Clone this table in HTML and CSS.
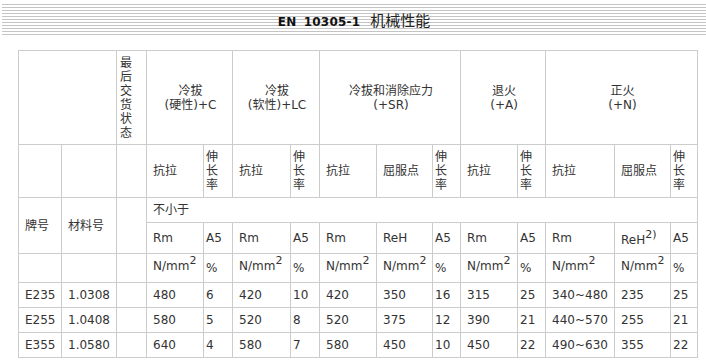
FILE: index.html
```html
<!DOCTYPE html>
<html lang="zh">
<head>
<meta charset="utf-8">
<title>EN 10305-1 机械性能</title>
<link rel="stylesheet" href="styles.css">
</head>
<body>
<div class="title"><b>EN 10305-1</b><span class="zh">机械性能</span></div>
<table class="props">
  <colgroup>
    <col style="width:43px"><col style="width:55px"><col style="width:30px">
    <col style="width:57px"><col style="width:29px">
    <col style="width:58px"><col style="width:29px">
    <col style="width:57px"><col style="width:56px"><col style="width:28px">
    <col style="width:57px"><col style="width:28px">
    <col style="width:69px"><col style="width:56px"><col style="width:27px">
  </colgroup>
  <tr class="r1">
    <td colspan="2"></td>
    <td class="state">最后交货状态</td>
    <td colspan="2" class="grp">冷拔<br>(硬性)+C</td>
    <td colspan="2" class="grp">冷拔<br>(软性)+LC</td>
    <td colspan="3" class="grp">冷拔和消除应力<br>(+SR)</td>
    <td colspan="2" class="grp">退火<br>(+A)</td>
    <td colspan="3" class="grp">正火<br>(+N)</td>
  </tr>
  <tr class="r2">
    <td></td><td></td><td></td>
    <td>抗拉</td><td class="nar">伸长率</td>
    <td>抗拉</td><td class="nar">伸长率</td>
    <td>抗拉</td><td>屈服点</td><td class="nar">伸长率</td>
    <td>抗拉</td><td class="nar">伸长率</td>
    <td>抗拉</td><td>屈服点</td><td class="nar">伸长率</td>
  </tr>
  <tr class="r3">
    <td rowspan="2">牌号</td><td rowspan="2">材料号</td><td rowspan="2"></td>
    <td colspan="12">不小于</td>
  </tr>
  <tr class="r4">
    <td>Rm</td><td class="nar">A5</td>
    <td>Rm</td><td class="nar">A5</td>
    <td>Rm</td><td>ReH</td><td class="nar">A5</td>
    <td>Rm</td><td class="nar">A5</td>
    <td>Rm</td><td class="low">ReH<sup>2)</sup></td><td class="nar">A5</td>
  </tr>
  <tr class="r5">
    <td></td><td></td><td></td>
    <td>N/mm<sup>2</sup></td><td class="nar">%</td>
    <td>N/mm<sup>2</sup></td><td class="nar">%</td>
    <td>N/mm<sup>2</sup></td><td>N/mm<sup>2</sup></td><td class="nar">%</td>
    <td>N/mm<sup>2</sup></td><td class="nar">%</td>
    <td>N/mm<sup>2</sup></td><td>N/mm<sup>2</sup></td><td class="nar">%</td>
  </tr>
  <tr class="rd">
    <td>E235</td><td>1.0308</td><td></td>
    <td>480</td><td class="nar">6</td>
    <td>420</td><td class="nar">10</td>
    <td>420</td><td>350</td><td class="nar">16</td>
    <td>315</td><td class="nar">25</td>
    <td>340~480</td><td>235</td><td class="nar">25</td>
  </tr>
  <tr class="rd">
    <td>E255</td><td>1.0408</td><td></td>
    <td>580</td><td class="nar">5</td>
    <td>520</td><td class="nar">8</td>
    <td>520</td><td>375</td><td class="nar">12</td>
    <td>390</td><td class="nar">21</td>
    <td>440~570</td><td>255</td><td class="nar">21</td>
  </tr>
  <tr class="rd">
    <td>E355</td><td>1.0580</td><td></td>
    <td>640</td><td class="nar">4</td>
    <td>580</td><td class="nar">7</td>
    <td>580</td><td>450</td><td class="nar">10</td>
    <td>450</td><td class="nar">22</td>
    <td>490~630</td><td>355</td><td class="nar">22</td>
  </tr>
</table>
</body>
</html>
```
FILE: styles.css
```css
html, body {
  margin: 0;
  padding: 0;
  background: #fff;
}
body {
  font-family: "DejaVu Sans", "Noto Sans CJK SC", sans-serif;
  font-size: 12px;
  color: #333;
}
.title {
  margin: 4px 0 0 2px;
  height: 31px;
  line-height: 31px;
  text-align: center;
  color: #111;
  background: repeating-linear-gradient(to bottom, #c4c4c4 0, #c4c4c4 1px, #fff 1px, #fff 3px);
}
.title b {
  font-family: "DejaVu Sans", sans-serif;
  font-weight: bold;
  font-size: 12px;
  letter-spacing: 0.2px;
  word-spacing: 3px;
  margin-right: 10px;
}
.title .zh {
  font-family: "Noto Sans CJK SC", sans-serif;
  font-size: 15px;
  font-weight: normal;
  color: #222;
}
.props {
  margin: 15px 0 0 18px;
  border-collapse: collapse;
  table-layout: fixed;
  width: 680px;
}
.props td {
  border: 1px solid #cccccc;
  padding: 0 4px 0 6px;
  text-align: left;
  vertical-align: middle;
  line-height: 14px;
  white-space: normal;
  overflow: hidden;
}
.props td.nar {
  padding: 0 6px 0 2px;
}
.props td.grp {
  text-align: center;
  line-height: 14px;
}
.props td.state {
  padding: 5px 4px 0 3px;
  line-height: 14px;
  vertical-align: top;
}
.props sup {
  font-size: 11px;
  line-height: 0;
  vertical-align: 6px;
}
.r1 { height: 94px; }
.r2 { height: 53px; }
.r3 { height: 25px; }
.r4 { height: 31px; }
.r5 { height: 29px; }
.rd { height: 25px; }
.r5 td { padding-bottom: 4px; }
.props td.low { padding-top: 4px; }
```
